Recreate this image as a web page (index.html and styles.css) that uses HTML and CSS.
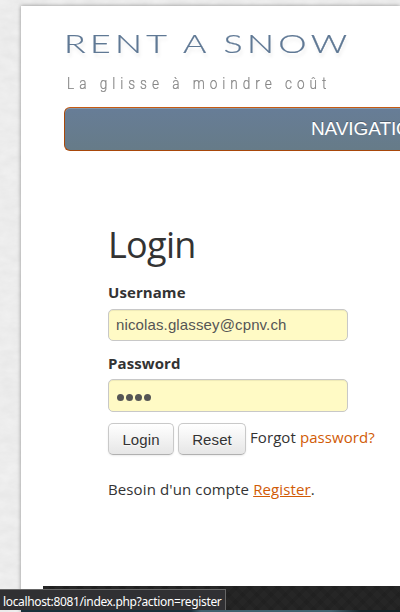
FILE: index.html
```html
<!DOCTYPE html>
<html lang="fr">
<head>
<meta charset="utf-8">
<title>Rent A Snow - Login</title>
<link rel="stylesheet" href="styles.css">
</head>
<body>
<svg class="paper" width="400" height="612" aria-hidden="true">
  <filter id="grain"><feTurbulence type="fractalNoise" baseFrequency="0.06 0.11" numOctaves="4" seed="4"/><feColorMatrix values="0.1 0 0 0 0.79  0.1 0 0 0 0.79  0.1 0 0 0 0.79  0 0 0 0 1"/></filter>
  <rect width="400" height="612" filter="url(#grain)"/>
</svg>
<div class="page">
  <header class="header">
    <div class="brand">RENT A SNOW</div>
    <div class="tagline">La glisse à moindre coût</div>
  </header>
  <nav class="nav">NAVIGATION</nav>
  <main class="content">
    <h1>Login</h1>
    <form>
      <label for="user">Username</label>
      <input id="user" type="text" value="nicolas.glassey@cpnv.ch">
      <label for="pass">Password</label>
      <div class="field" id="pass"><i></i><i></i><i></i><i></i></div>
      <div class="actions">
        <button type="button">Login</button>
        <button type="button">Reset</button>
        <span class="forgot">Forgot <a href="#">password?</a></span>
      </div>
      <p class="register">Besoin d'un compte <a href="#">Register</a>.</p>
    </form>
  </main>
  <footer class="footer"></footer>
  <div class="strip"></div>
</div>
<div class="status">localhost:8081/index.php?action=register</div>
</body>
</html>
```
FILE: styles.css
```css
* { box-sizing: border-box; }
html, body { height: 612px; overflow: hidden; }
body { margin: 0; padding: 6px 0 0 21px; background: #eee; color: #333; font: 15px/20px "Open Sans", sans-serif; letter-spacing: .08px; }
.paper { position: absolute; left: 0; top: 0; z-index: -1; }
.page { display: flex; flex-direction: column; width: 379px; height: 606px; background: #fff; box-shadow: 0 0 4px rgba(0,0,0,.4); }
.header { height: 101px; padding: 21px 0 0 43px; white-space: nowrap; }
.brand { width: 230px; height: 32px; font: 300 25px/32px Lato, sans-serif; letter-spacing: 3px; color: #5f7894; -webkit-text-stroke: .2px #5f7894; transform: scaleX(1.43); transform-origin: 0 0; text-shadow: 1px 4px 3px rgba(0,0,0,.08); }
.tagline { width: 350px; margin: 12px 0 0 3px; font: 17px/24px Roboto, sans-serif; font-weight: 300; letter-spacing: 6.2px; color: #858585; -webkit-text-stroke: .2px #858585; transform: scaleX(.8); transform-origin: 0 0; }
.nav { height: 44px; margin-left: 43px; padding-left: 246px; border: 1px solid #a8480a; border-right: 0; border-top-color: #c65a11; border-radius: 6px 0 0 6px; background: linear-gradient(#677d97, #667b88); box-shadow: inset 0 1px 0 rgba(255,255,255,.2); color: #fff; font: 19px/41px "Liberation Sans", sans-serif; letter-spacing: -.1px; text-shadow: 0 -1px 0 rgba(0,0,0,.25); overflow: hidden; }
.content { flex: 1; padding: 74px 0 0 87px; }
h1 { margin: 0 0 17px; font-size: 36px; line-height: 40px; font-weight: 400; letter-spacing: -.7px; }
label { display: block; height: 20px; margin-bottom: 7px; font-weight: 700; }
input, .field { display: flex; align-items: center; width: 240px; height: 32px; margin: 0 0 12px; padding: 0 7px 1px; border: 1px solid #c8c8c8; border-radius: 5px; background: #fffac5; color: #555; font: 15px "Liberation Sans", sans-serif; letter-spacing: .13px; box-shadow: inset 0 1px 1px rgba(0,0,0,.07); }
.field { height: 33px; gap: 2px; margin: -1px 0 11px; padding: 3px 8px 0; }
.field i { width: 7px; height: 7px; border-radius: 50%; background: #555; }
.actions { display: flex; gap: 4px; white-space: nowrap; }
button { width: 66px; height: 32px; padding: 0; border: 1px solid #c9c9c9; border-bottom-color: #b0b0b0; border-radius: 5px; background: linear-gradient(#fff, #e6e6e6); color: #333; font: 15px "Liberation Sans", sans-serif; letter-spacing: .1px; box-shadow: 0 1px 2px rgba(0,0,0,.08); text-shadow: 0 1px 1px rgba(255,255,255,.75); }
button + button { width: 68px; }
.forgot { margin-top: 4px; }
a { color: #d15b06; text-decoration: none; }
.register { margin: 24px 0 0; letter-spacing: .12px; }
.register a { text-decoration: underline; }
.footer { height: 24px; margin-left: 22px; background: repeating-linear-gradient(45deg, rgba(0,0,0,.08) 0 4px, transparent 4px 10px), repeating-linear-gradient(-45deg, rgba(0,0,0,.08) 0 4px, transparent 4px 10px), #262626; }
.strip { height: 2px; background: linear-gradient(90deg, #19303b 0 170px, #41616f 180px 310px, #142329 340px); }
.status { position: absolute; left: 0; top: 589px; width: 226px; height: 21px; padding-left: 3px; border: solid #666; border-width: 1px 1px 0 0; background: #303033; color: #fff; font: 12px/23px "Noto Sans", sans-serif; letter-spacing: -.35px; white-space: nowrap; }
```
